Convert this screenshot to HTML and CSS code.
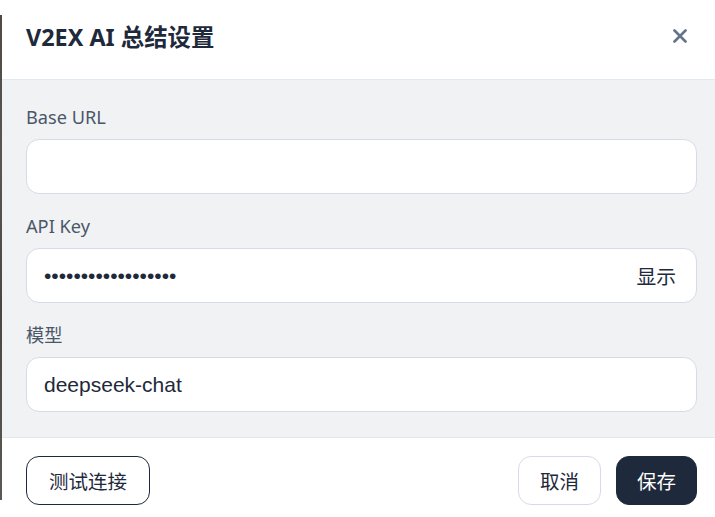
FILE: index.html
```html
<!DOCTYPE html>
<html lang="zh-CN">
<head>
<meta charset="utf-8">
<title>V2EX AI 总结设置</title>
<link rel="stylesheet" href="styles.css">
</head>
<body>
<div class="backdrop-edge"></div>
<div class="modal">
  <header class="modal-header">
    <h2 class="modal-title">V2EX AI 总结设置</h2>
    <button class="close-btn" aria-label="关闭">
      <svg width="14" height="14" viewBox="0 0 14 14"><path d="M1.5 1.5 L12.5 12.5 M12.5 1.5 L1.5 12.5" stroke="#64748b" stroke-width="2.6" stroke-linecap="round"/></svg>
    </button>
  </header>
  <div class="modal-body">
    <div class="field">
      <label class="field-label">Base URL</label>
      <input class="text-input" type="text" value="">
    </div>
    <div class="field">
      <label class="field-label">API Key</label>
      <div class="input-group">
        <input class="group-input" type="password" value="sk-0123456789abcde">
        <button class="toggle-btn">显示</button>
      </div>
    </div>
    <div class="field">
      <label class="field-label">模型</label>
      <input class="text-input" type="text" value="deepseek-chat">
    </div>
  </div>
  <footer class="modal-footer">
    <button class="btn btn-outline">测试连接</button>
    <div class="footer-actions">
      <button class="btn btn-light">取消</button>
      <button class="btn btn-primary">保存</button>
    </div>
  </footer>
</div>
</body>
</html>
```

FILE: styles.css
```css
html, body {
  margin: 0;
  padding: 0;
  height: 517px;
  overflow: hidden;
  background: #ffffff;
}
body {
  display: flex;
  align-items: stretch;
  font-family: "Noto Sans", "Noto Sans CJK SC", sans-serif;
}
.backdrop-edge {
  flex: 0 0 2px;
  margin: 15px 0 17px 0;
  background: linear-gradient(#4f4a46, #5a5652 30%, #4c4642 60%, #5b5855);
}
.modal {
  flex: 0 0 719px;
  display: flex;
  flex-direction: column;
  background: #ffffff;
}
.modal-header {
  height: 79px;
  box-sizing: border-box;
  padding: 0 24px 0 24px;
  display: flex;
  align-items: center;
  justify-content: space-between;
  border-bottom: 1px solid #e2e8f0;
  flex: 0 0 80px;
}
.modal-title {
  margin: 0;
  margin-top: -6px;
  font-size: 23.4px;
  font-weight: 700;
  color: #1e293b;
  line-height: 32px;
}
.close-btn {
  width: 34px;
  height: 34px;
  border: none;
  background: transparent;
  padding: 0;
  display: flex;
  align-items: center;
  justify-content: center;
  margin-top: -7px;
}
.close-btn svg { display: block; }
.modal-body {
  background: #f1f2f4;
  padding: 24px 24px 25px 24px;
  display: flex;
  flex-direction: column;
  gap: 19px;
}
.field {
  display: flex;
  flex-direction: column;
}
.field-label {
  font-size: 18.2px;
  line-height: 26px;
  color: #4b5768;
  margin-bottom: 9px;
}
.text-input,
.input-group {
  height: 55px;
  box-sizing: border-box;
  border: 1px solid #d5dce8;
  border-radius: 13px;
  background: #ffffff;
}
.text-input {
  width: 100%;
  padding: 0 17px;
  font-family: "Liberation Sans", Arial, sans-serif;
  font-size: 21px;
  color: #1e293b;
  outline: none;
}
.input-group {
  display: flex;
  align-items: center;
  padding: 0 20px 0 17px;
}
.group-input {
  flex: 1;
  min-width: 0;
  border: none;
  outline: none;
  padding: 0;
  background: transparent;
  font-family: "Liberation Sans", Arial, sans-serif;
  font-size: 21px;
  color: #1e293b;
}
.toggle-btn {
  border: none;
  background: transparent;
  padding: 0;
  font-family: "Noto Sans", "Noto Sans CJK SC", sans-serif;
  font-size: 19.8px;
  color: #1e293b;
}
.modal-footer {
  border-top: 1px solid #e2e8f0;
  padding: 18px 24px 18px 24px;
  display: flex;
  justify-content: space-between;
  align-items: center;
}
.footer-actions {
  display: flex;
  gap: 15px;
}
.btn {
  height: 49px;
  box-sizing: border-box;
  border-radius: 13px;
  font-family: "Noto Sans", "Noto Sans CJK SC", sans-serif;
  font-size: 19.5px;
  padding: 0 21px;
  cursor: pointer;
}
.btn-outline {
  border: 1.3px solid #1e293b;
  background: #ffffff;
  color: #1e293b;
  padding: 0 22px;
}
.btn-light {
  border: 1px solid #d5dce8;
  background: #ffffff;
  color: #1e293b;
}
.btn-primary {
  border: 1px solid #1e293b;
  background: #1e293b;
  color: #ffffff;
  padding: 0 20px;
}
```
